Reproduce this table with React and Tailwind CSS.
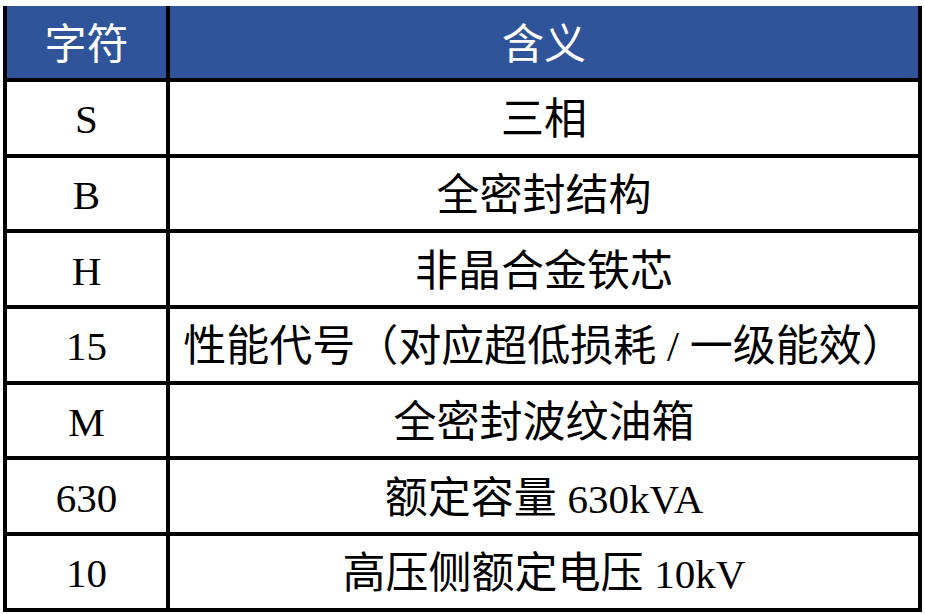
import React from 'react';

const rows = [
  ['S', '三相'],
  ['B', '全密封结构'],
  ['H', '非晶合金铁芯'],
  ['15', '性能代号（对应超低损耗 / 一级能效）'],
  ['M', '全密封波纹油箱'],
  ['630', '额定容量 630kVA'],
  ['10', '高压侧额定电压 10kV'],
];

const font = { fontFamily: '"Liberation Serif", "Noto Sans CJK SC", serif' };

// latin runs a bit smaller than the CJK glyphs, like the original
function Mixed({ text }) {
  return (
    <span>
      {text.split(/([A-Za-z0-9]+)/).map((part, i) =>
        /^[A-Za-z0-9]+$/.test(part) ? (
          <span key={i} className="text-[41px]">{part}</span>
        ) : (
          <span key={i}>{part}</span>
        )
      )}
    </span>
  );
}

export default function App() {
  return (
    <div className="w-[925px] h-[614px] bg-white pt-[6px] pl-[3px]" style={font}>
      <div className="w-[919px] border-x-4 border-b-4 border-black">
        {/* header */}
        <div className="grid grid-cols-[163px_1fr] h-[72px] bg-[#30549a] text-white text-[42px]">
          <div className="flex items-center justify-center border-r-4 border-black pt-[6px]">字符</div>
          <div className="flex items-center justify-center pt-[6px]">含义</div>
        </div>
        {rows.map(([code, meaning], i) => (
          <div
            key={i}
            className="grid grid-cols-[163px_1fr] h-[75.7px] border-t-4 border-black text-black text-[43px] leading-none"
          >
            <div className="flex items-center justify-center border-r-4 border-black pt-[4px] text-[41px]">{code}</div>
            <div className="flex items-center justify-center whitespace-pre pt-[4px]">
              <Mixed text={meaning} />
            </div>
          </div>
        ))}
      </div>
    </div>
  );
}
